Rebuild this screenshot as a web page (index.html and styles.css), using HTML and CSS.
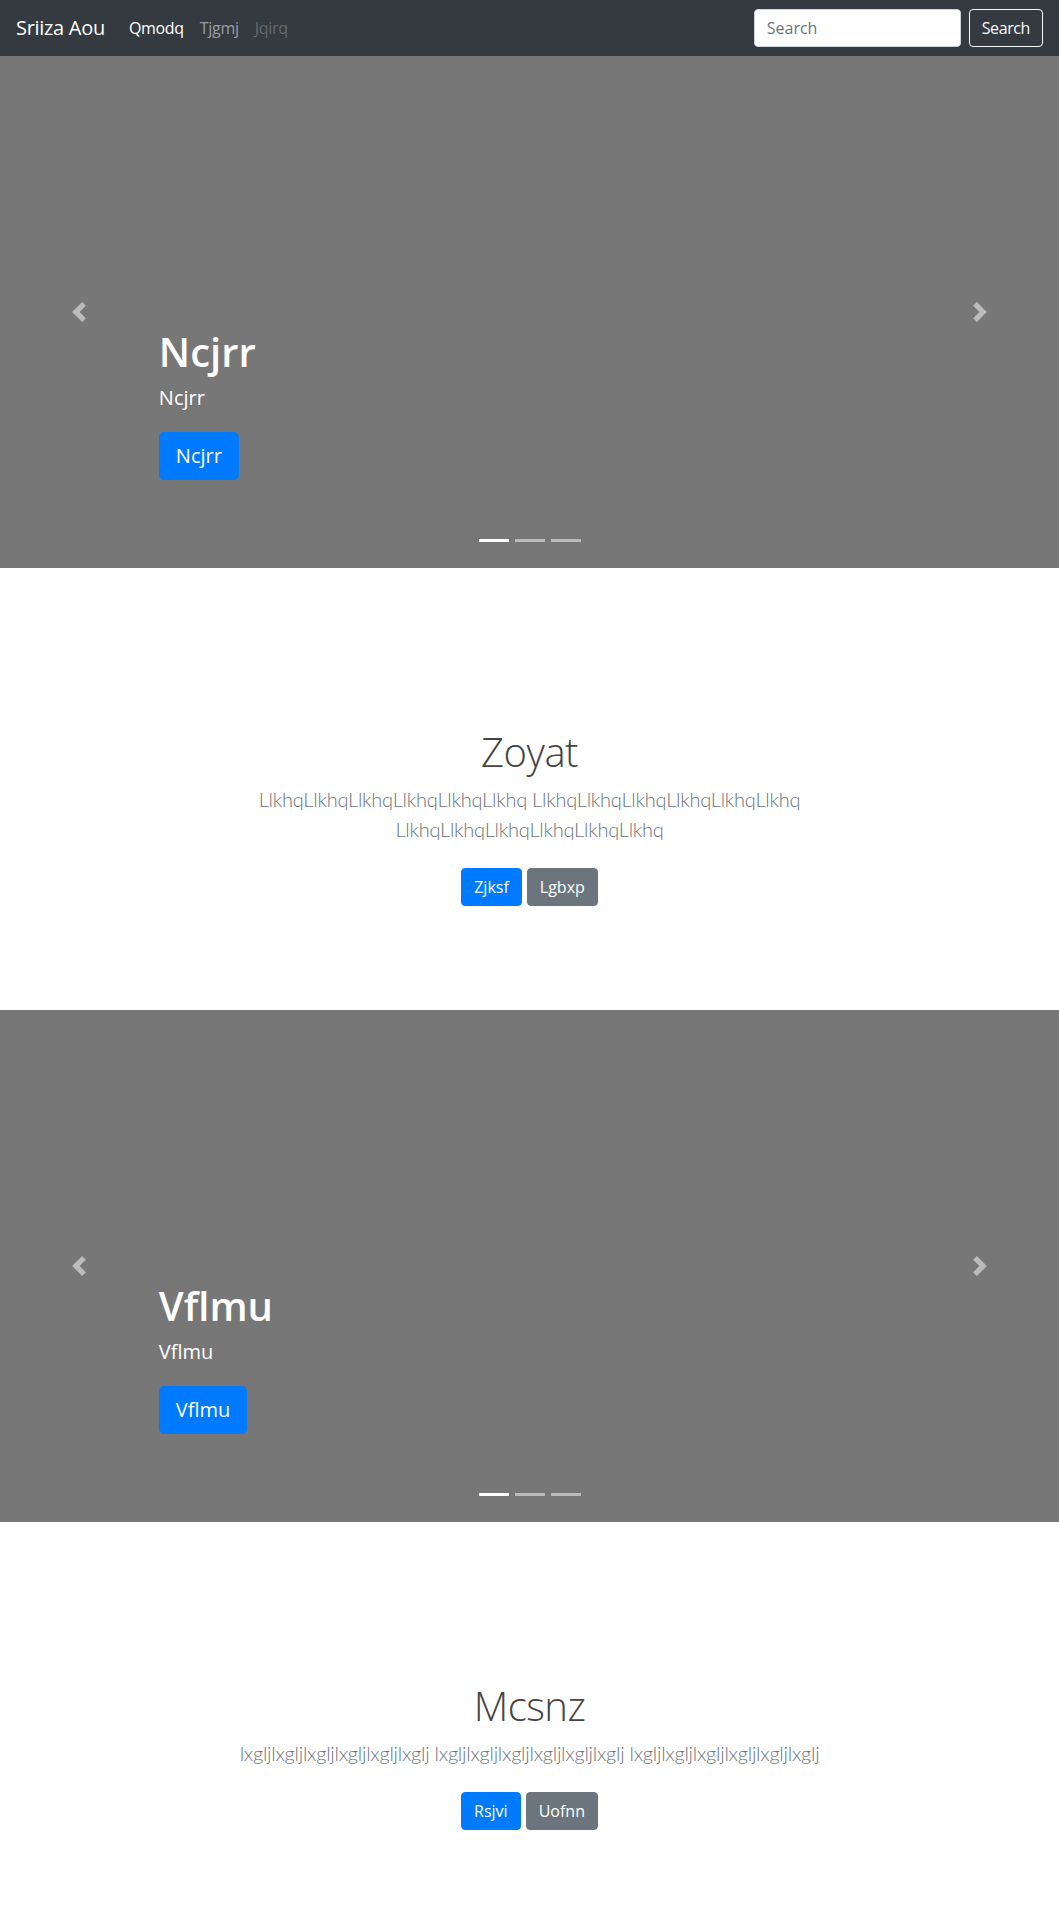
FILE: index.html
```html
<!DOCTYPE html>
<html lang="en">
<head>
<meta charset="utf-8">
<title>Sriiza Aou</title>
<link rel="stylesheet" href="styles.css">
</head>
<body>
<header class="navbar">
  <a class="brand" href="#">Sriiza Aou</a>
  <ul class="nav">
    <li><a class="nav-link active" href="#">Qmodq</a></li>
    <li><a class="nav-link" href="#">Tjgmj</a></li>
    <li><a class="nav-link disabled" href="#">Jqirq</a></li>
  </ul>
  <form class="search">
    <input class="search-input" type="text" placeholder="Search">
    <button class="btn btn-outline-light" type="button">Search</button>
  </form>
</header>
<main>
  <div class="carousel">
    <div class="carousel-item">
      <div class="caption">
        <h1 class="caption-title">Ncjrr</h1>
        <p class="caption-text">Ncjrr</p>
        <p class="caption-action"><a class="btn btn-lg btn-primary" href="#">Ncjrr</a></p>
      </div>
    </div>
    <ol class="indicators">
      <li class="active"></li><li></li><li></li>
    </ol>
    <a class="control control-prev" href="#"><svg width="20" height="20" viewBox="0 0 8 8" fill="#fff"><path d="M5.25 0l-4 4 4 4 1.5-1.5L4.25 4l2.5-2.5L5.25 0z"/></svg></a>
    <a class="control control-next" href="#"><svg width="20" height="20" viewBox="0 0 8 8" fill="#fff"><path d="M2.75 0l-1.5 1.5L3.75 4l-2.5 2.5L2.75 8l4-4-4-4z"/></svg></a>
  </div>

  <section class="jumbotron">
    <div class="container">
      <h1 class="jumbotron-heading">Zoyat</h1>
      <p class="lead">LlkhqLlkhqLlkhqLlkhqLlkhqLlkhq LlkhqLlkhqLlkhqLlkhqLlkhqLlkhq LlkhqLlkhqLlkhqLlkhqLlkhqLlkhq</p>
      <p class="actions">
        <a class="btn btn-primary" href="#">Zjksf</a>
        <a class="btn btn-secondary" href="#">Lgbxp</a>
      </p>
    </div>
  </section>

  <div class="carousel">
    <div class="carousel-item">
      <div class="caption">
        <h1 class="caption-title">Vflmu</h1>
        <p class="caption-text">Vflmu</p>
        <p class="caption-action"><a class="btn btn-lg btn-primary" href="#">Vflmu</a></p>
      </div>
    </div>
    <ol class="indicators">
      <li class="active"></li><li></li><li></li>
    </ol>
    <a class="control control-prev" href="#"><svg width="20" height="20" viewBox="0 0 8 8" fill="#fff"><path d="M5.25 0l-4 4 4 4 1.5-1.5L4.25 4l2.5-2.5L5.25 0z"/></svg></a>
    <a class="control control-next" href="#"><svg width="20" height="20" viewBox="0 0 8 8" fill="#fff"><path d="M2.75 0l-1.5 1.5L3.75 4l-2.5 2.5L2.75 8l4-4-4-4z"/></svg></a>
  </div>

  <section class="jumbotron">
    <div class="container">
      <h1 class="jumbotron-heading">Mcsnz</h1>
      <p class="lead">lxgljlxgljlxgljlxgljlxgljlxglj lxgljlxgljlxgljlxgljlxgljlxglj lxgljlxgljlxgljlxgljlxgljlxglj</p>
      <p class="actions">
        <a class="btn btn-primary" href="#">Rsjvi</a>
        <a class="btn btn-secondary" href="#">Uofnn</a>
      </p>
    </div>
  </section>
</main>
</body>
</html>
```

FILE: styles.css
```css
* { box-sizing: border-box; }

body {
  margin: 0;
  font-family: "Segoe UI", "Open Sans", "Noto Sans", Arial, sans-serif;
  font-size: 16px;
  line-height: 1.5;
  color: #212529;
  background: #fff;
}

a { text-decoration: none; }

.navbar {
  display: flex;
  align-items: center;
  padding: 8px 16px;
  background: #343a40;
}

.brand {
  font-size: 20px;
  line-height: 30px;
  padding: 5px 0;
  margin-right: 16px;
  color: #fff;
  white-space: nowrap;
  letter-spacing: -0.3px;
}

.nav {
  display: flex;
  list-style: none;
  margin: 0;
  padding: 0;
  flex: 1;
}

.nav-link {
  display: block;
  padding: 8px;
  color: rgba(255,255,255,.5);
  letter-spacing: -0.3px;
}
.nav-link.active { color: #fff; }
.nav-link.disabled { color: rgba(255,255,255,.25); }

.search {
  display: flex;
  align-items: center;
  margin: 0;
}

.search-input {
  width: 207px;
  height: 38px;
  padding: 6px 12px;
  font-family: inherit;
  font-size: 16px;
  line-height: 1.5;
  color: #495057;
  background: #fff;
  border: 1px solid #ced4da;
  border-radius: 4px;
  margin-right: 8px;
}
.search-input::placeholder { color: #6c757d; }

.btn {
  display: inline-block;
  font-family: inherit;
  font-size: 16px;
  line-height: 1.5;
  padding: 6px 12px;
  border: 1px solid transparent;
  border-radius: 4px;
  text-align: center;
  color: #fff;
  white-space: nowrap;
}
.btn-outline-light {
  background: transparent;
  border-color: #f8f9fa;
  color: #f8f9fa;
  letter-spacing: -0.4px;
}
.btn-primary { background: #007bff; border-color: #007bff; }
.btn-secondary { background: #6c757d; border-color: #6c757d; }
.btn-lg {
  font-size: 20px;
  padding: 8px 16px;
  border-radius: 4.8px;
}

/* Carousel */
.carousel {
  position: relative;
  height: 512px;
  margin-bottom: 64px;
  background: #777;
  overflow: hidden;
}

.carousel-item {
  height: 100%;
  display: flex;
  flex-direction: column;
  justify-content: flex-end;
  padding: 0 15% 68px;
}

.caption {
  position: relative;
  z-index: 10;
  color: #fff;
  text-align: left;
}

.caption-title {
  margin: 0 0 8px;
  font-size: 40px;
  font-weight: 600;
  line-height: 1.2;
}

.caption-text {
  margin: 0 0 20px;
  font-size: 20px;
  line-height: 1.4;
}

.caption-action {
  margin: 0 0 20px;
  line-height: 1;
}

.indicators {
  position: absolute;
  left: 0;
  right: 0;
  bottom: 0;
  z-index: 15;
  display: flex;
  justify-content: center;
  list-style: none;
  padding: 0;
  margin: 0 15% 16px;
}
.indicators li {
  box-sizing: content-box;
  width: 30px;
  height: 3px;
  margin: 0 3px;
  background: #fff;
  background-clip: padding-box;
  border-top: 10px solid transparent;
  border-bottom: 10px solid transparent;
  opacity: .5;
}
.indicators li.active { opacity: 1; }

.control {
  position: absolute;
  top: 0;
  bottom: 0;
  z-index: 1;
  width: 15%;
  display: flex;
  align-items: center;
  justify-content: center;
  opacity: .5;
}
.control-prev { left: 0; }
.control-next { right: 0; }

/* Jumbotron */
.jumbotron {
  padding: 96px 0;
  text-align: center;
  background: #fff;
}

.container {
  max-width: 640px;
  margin: 0 auto;
  padding: 0 15px;
}

.jumbotron-heading {
  margin: 0 0 8px;
  font-size: 40px;
  font-weight: 300;
  line-height: 1.2;
  color: #444;
  letter-spacing: -0.5px;
}

.lead {
  margin: 0 0 16px;
  font-family: Lato, "Open Sans", sans-serif;
  font-size: 20px;
  font-weight: 300;
  color: #6c757d;
  letter-spacing: -0.25px;
}

.actions {
  display: flex;
  justify-content: center;
  gap: 5px;
  margin: 0;
  padding: 8px 0;
}
```
